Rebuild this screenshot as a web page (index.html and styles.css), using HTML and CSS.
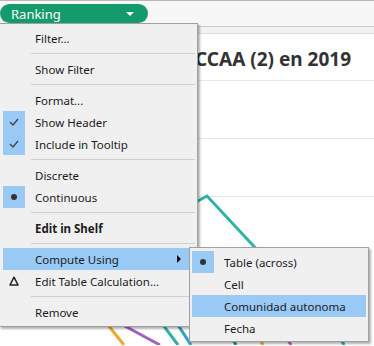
FILE: index.html
```html
<!DOCTYPE html>
<html lang="es">
<head>
    <meta charset="UTF-8">
    <title>Ranking - menu</title>
    <link rel="stylesheet" href="styles.css">
</head>
<body>
    <div class="shelf">
        <div class="pill">
            <span>Ranking</span>
            <span class="pill-arrow"></span>
        </div>
    </div>
    <div class="shelf-strip"></div>

    <div class="chart">
        <h1 class="chart-title">CCAA (2) en 2019</h1>
        <svg class="plot" width="374" height="265" viewBox="0 0 374 265">
            <line x1="0" y1="0.5" x2="374" y2="0.5" stroke="#e8e8e8"/>
            <line x1="0" y1="58.5" x2="374" y2="58.5" stroke="#e8e8e8"/>
            <line x1="0" y1="116.5" x2="374" y2="116.5" stroke="#e8e8e8"/>
            <g fill="none" stroke-width="3">
                <polyline points="150,140 196,122 207,116 262,175" stroke="#2ab5a2"/>
                <polyline points="60,180 108,245 124,265" stroke="#f5a623"/>
                <polyline points="60,220 123,245 160,265" stroke="#a162c4"/>
                <polyline points="140,210 163,245 178,265" stroke="#2ab5a2"/>
                <polyline points="150,200 178,245 191,265" stroke="#29a6c8"/>
                <polyline points="228,250 236,265" stroke="#1f9e6e"/>
                <polyline points="255,250 263,265" stroke="#e8b42a"/>
                <polyline points="282,250 291,265" stroke="#c963b0"/>
                <polyline points="336,250 344,265" stroke="#2ab5a2"/>
            </g>
        </svg>
    </div>

    <ul class="menu main-menu">
        <li class="item"><span class="mark"></span>Filter...</li>
        <li class="sep"></li>
        <li class="item"><span class="mark"></span>Show Filter</li>
        <li class="sep"></li>
        <li class="item"><span class="mark"></span>Format...</li>
        <li class="item"><span class="mark on">
            <svg width="10" height="8" viewBox="0 0 10 8"><polyline points="1,4 4,7 9,1" fill="none" stroke="#444" stroke-width="1.4"/></svg>
        </span>Show Header</li>
        <li class="item"><span class="mark on">
            <svg width="10" height="8" viewBox="0 0 10 8"><polyline points="1,4 4,7 9,1" fill="none" stroke="#444" stroke-width="1.4"/></svg>
        </span>Include in Tooltip</li>
        <li class="sep"></li>
        <li class="item"><span class="mark"></span>Discrete</li>
        <li class="item"><span class="mark on"><span class="dot"></span></span>Continuous</li>
        <li class="sep"></li>
        <li class="item bold"><span class="mark"></span>Edit in Shelf</li>
        <li class="sep"></li>
        <li class="item active"><span class="mark"></span>Compute Using<span class="sub-arrow"></span></li>
        <li class="item"><span class="mark">
            <svg width="10" height="10" viewBox="0 0 10 10"><polygon points="5,1.2 9,9 1,9" fill="none" stroke="#222" stroke-width="1.5" stroke-linejoin="round"/></svg>
        </span>Edit Table Calculation...</li>
        <li class="sep"></li>
        <li class="item"><span class="mark"></span>Remove</li>
    </ul>

    <ul class="menu sub-menu">
        <li class="item"><span class="mark on"><span class="dot"></span></span>Table (across)</li>
        <li class="item"><span class="mark"></span>Cell</li>
        <li class="item active"><span class="mark"></span>Comunidad autonoma</li>
        <li class="item"><span class="mark"></span>Fecha</li>
    </ul>
</body>
</html>
```

FILE: styles.css
```css
/* Fondo */
body {
    margin: 0;
    width: 374px;
    height: 346px;
    overflow: hidden;
    position: relative;
    background-color: white;
    font-family: 'Noto Sans', 'DejaVu Sans', sans-serif;
}

.shelf {
    border-top: 1px solid #b9b9b9;
    border-bottom: 1px solid #c9c9c9;
    background-color: #f7f7f7;
    padding-top: 3px;
    height: 22px;
}
.pill {
    width: 136px;
    height: 19px;
    padding: 0 12px 0 0;
    background-color: #149b6c;
    border-radius: 10px;
    color: white;
    font-size: 13px;
    display: flex;
    align-items: center;
    justify-content: space-between;
}
.pill span:first-child {
    padding-left: 11px;
}
.pill-arrow {
    width: 0;
    height: 0;
    border-left: 4px solid transparent;
    border-right: 4px solid transparent;
    border-top: 4px solid white;
    margin-right: 2px;
}
.shelf-strip {
    height: 6px;
    background-color: #f2f2f2;
    border-bottom: 1px solid #dedede;
}

.chart-title {
    margin: 0;
    height: 46px;
    line-height: 50px;
    padding-left: 195px;
    font-size: 19px;
    font-weight: bold;
    color: #333;
    white-space: nowrap;
}
.plot {
    display: block;
}

/* Menu */
.menu {
    position: absolute;
    margin: 0;
    list-style: none;
    background-color: #f0f0f0;
    border: 1px solid #a0a0a0;
    box-shadow: 2px 2px 2px rgba(0, 0, 0, 0.3);
    font-size: 11.5px;
    color: #1b1b1b;
}
.main-menu {
    left: -1px;
    top: 23px;
    width: 192px;
    padding: 3px 2px 3px 3px;
}
.sub-menu {
    left: 189px;
    top: 247px;
    width: 174px;
    padding: 3px 2px 2px 2px;
}
.item {
    height: 22px;
    display: flex;
    align-items: center;
    position: relative;
}
.item.bold {
    font-weight: bold;
}
.item.active {
    background-color: #99c9f5;
}
.mark {
    width: 22px;
    height: 22px;
    margin-right: 10px;
    display: flex;
    align-items: center;
    justify-content: center;
}
.mark.on {
    background-color: #99c9f5;
}
.dot {
    width: 6px;
    height: 6px;
    border-radius: 50%;
    background-color: #333;
}
.sep {
    height: 1px;
    margin: 4px 0 4px 28px;
    background-color: #d0d0d0;
}
.sub-arrow {
    position: absolute;
    right: 14px;
    top: 7px;
    width: 0;
    height: 0;
    border-top: 4px solid transparent;
    border-bottom: 4px solid transparent;
    border-left: 4px solid #111;
}
```
